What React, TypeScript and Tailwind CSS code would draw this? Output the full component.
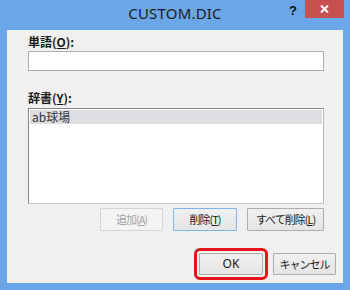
import React from "react";

const jp = { fontFamily: '"Noto Sans CJK JP", "Noto Sans", sans-serif' };

function Btn({
  children,
  w,
  variant = "normal",
  className = "",
}: {
  children: React.ReactNode;
  w: string;
  variant?: "normal" | "disabled" | "focus";
  className?: string;
}) {
  const look =
    variant === "disabled"
      ? "border-[#d5d5d5] bg-[#f4f4f4] text-[#a3a3a3]"
      : variant === "focus"
        ? "border-[#7eb4ea] bg-gradient-to-b from-[#f0f0f0] to-[#e5e5e5] text-[#1a1a1a]"
        : "border-[#acacac] bg-gradient-to-b from-[#f0f0f0] to-[#e5e5e5] text-[#1a1a1a]";
  return (
    <div
      className={`flex items-center justify-center rounded-[1px] border text-[11px] leading-none tracking-[-1px] ${look} ${w} ${className}`}
      style={jp}
    >
      {children}
    </div>
  );
}

export default function App() {
  return (
    <div className="flex h-[290px] w-[350px] flex-col bg-[#6aa6e8]">
      {/* title bar */}
      <div className="relative flex h-[30px] shrink-0 items-center justify-center pb-[3px]">
        <span
          className="text-[15px] tracking-[0.2px] text-[#1c1c1c]"
          style={{ fontFamily: '"Noto Sans", sans-serif' }}
        >
          CUSTOM.DIC
        </span>
        <span
          className="absolute right-[53px] top-[1px] text-[13px] font-bold text-[#111]"
          style={{ fontFamily: '"Liberation Sans", sans-serif' }}
        >
          ?
        </span>
        <div className="absolute right-[6px] top-0 flex h-[18px] w-[39px] items-center justify-center bg-[#c75050]">
          <svg width="9" height="8" viewBox="0 0 9 8">
            <path d="M1 0.5 L8 7.5 M8 0.5 L1 7.5" stroke="#fff" strokeWidth="2" />
          </svg>
        </div>
      </div>

      {/* client */}
      <div className="mx-[7px] mb-[7px] flex flex-1 flex-col bg-[#f0f0f0] pl-[21px] pr-[19px]" style={jp}>
        <div className="mt-[4px] h-[16px] text-[12px] font-bold leading-[16px] text-[#1a1a1a]">
          単語(<u>O</u>):
        </div>
        <div className="mt-[1px] h-[20px] border border-[#abadb3] bg-white" />

        <div className="mt-[19px] h-[16px] text-[12px] font-bold leading-[16px] text-[#1a1a1a]">
          辞書(<u>Y</u>):
        </div>
        <div className="mt-[2px] h-[96px] border border-[#828790] border-b-[#c7c9cd] border-r-[#b4b7bc] bg-white p-px">
          <div className="h-[14px] bg-[#dfdfe3] pl-[2px] text-[12px] leading-[14px] text-[#333]">
            ab球場
          </div>
        </div>

        <div className="mt-[4px] flex justify-end gap-[10px]">
          <Btn w="w-[63px] h-[23px]" variant="disabled">
            追加(<u>A</u>)
          </Btn>
          <Btn w="w-[64px] h-[23px]" variant="focus">
            削除(<u>T</u>)
          </Btn>
          <Btn w="w-[77px] h-[23px]">
            すべて削除(<u>L</u>)
          </Btn>
        </div>

        <div className="-mr-[12px] mt-[22px] flex justify-end gap-[10px]">
          <Btn
            w="w-[64px] h-[22px]"
            className="outline-3 outline-offset-2 outline-solid outline-[#e8131b]"
          >
            <span className="text-[12px] tracking-normal" style={{ fontFamily: '"Noto Sans", sans-serif' }}>
              OK
            </span>
          </Btn>
          <Btn w="w-[63px] h-[22px]" className="tracking-[-1.5px]">
            キャンセル
          </Btn>
        </div>
      </div>
    </div>
  );
}
